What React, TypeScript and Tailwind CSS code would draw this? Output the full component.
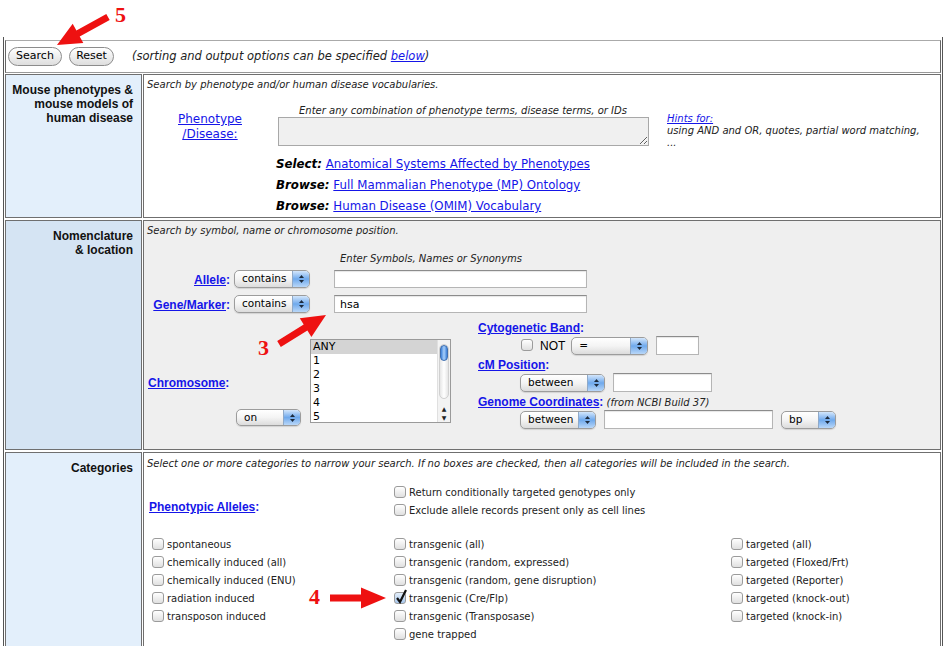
import React from 'react';

const verdana = "font-['DejaVu_Sans',Verdana,sans-serif]";
const arial = "font-['Liberation_Sans',Arial,sans-serif]";

const arrowPoints = (x1: number, y1: number, x2: number, y2: number, sw = 3.5, hl = 24, hw = 11) => {
  const len = Math.hypot(x2 - x1, y2 - y1);
  const dx = (x2 - x1) / len;
  const dy = (y2 - y1) / len;
  const nx = -dy;
  const ny = dx;
  const bx = x2 - dx * hl;
  const by = y2 - dy * hl;
  const pts = [
    [x1 + nx * sw, y1 + ny * sw],
    [bx + nx * sw, by + ny * sw],
    [bx + nx * hw, by + ny * hw],
    [x2, y2],
    [bx - nx * hw, by - ny * hw],
    [bx - nx * sw, by - ny * sw],
    [x1 - nx * sw, y1 - ny * sw],
  ];
  return pts.map(p => `${p[0].toFixed(1)},${p[1].toFixed(1)}`).join(' ');
};

const Arrows = () => (
  <svg className="absolute left-0 top-0 pointer-events-none" width="946" height="646">
    <polygon points={arrowPoints(108, 17, 57, 45)} fill="#ee1111" />
    <polygon points={arrowPoints(279, 344, 326, 315)} fill="#ee1111" />
    <polygon points={arrowPoints(330, 598, 386, 598, 3.5, 25, 10.5)} fill="#ee1111" />
    <text x="115" y="22" fill="#ee1111" fontSize="22" fontWeight="bold" fontFamily="Liberation Serif, serif">5</text>
    <text x="258" y="355" fill="#ee1111" fontSize="22" fontWeight="bold" fontFamily="Liberation Serif, serif">3</text>
    <text x="309" y="604" fill="#ee1111" fontSize="22" fontWeight="bold" fontFamily="Liberation Serif, serif">4</text>
  </svg>
);

const AquaSelect = ({ label, className }: { label: string; className: string }) => (
  <div className={`flex items-stretch rounded-[5px] border border-[#9c9c9c] bg-gradient-to-b from-white via-[#f4f4f4] to-[#dcdcdc] shadow-[0_1px_1px_rgba(0,0,0,0.12)] overflow-hidden ${className}`}>
    <span className={`flex-1 flex items-center pl-[7px] text-[10.5px] text-black ${verdana}`}>{label}</span>
    <span className="w-[17px] flex flex-col items-center justify-center gap-[2px] border-l border-[#8fa9c8] bg-gradient-to-b from-[#d3e6fb] via-[#6fa9ec] to-[#b9d7f8]">
      <svg width="5" height="3" viewBox="0 0 5 3"><path d="M2.5 0 L5 3 L0 3 Z" fill="#1c2a3c" /></svg>
      <svg width="5" height="3" viewBox="0 0 5 3"><path d="M0 0 L5 0 L2.5 3 Z" fill="#1c2a3c" /></svg>
    </span>
  </div>
);

const Box = ({ checked = false }: { checked?: boolean }) => (
  <span className={`relative inline-block shrink-0 w-[12px] h-[12px] rounded-[3px] border border-[#9b9b9b] bg-gradient-to-b ${checked ? 'from-[#e4effb] to-[#a9c9ee]' : 'from-white to-[#e0e0e0]'}`}>
    {checked && (
      <svg className="absolute left-[0px] top-[-4px]" width="13" height="15" viewBox="0 0 13 15">
        <path d="M2 9 L5 13 L11 1" stroke="#111" strokeWidth="2.2" fill="none" />
      </svg>
    )}
  </span>
);

const Check = ({ label, checked = false }: { label: string; checked?: boolean }) => (
  <div className="h-[18px] flex items-center">
    <Box checked={checked} />
    <span className="ml-[3px] text-[10px] text-[#222]">{label}</span>
  </div>
);

const TextBox = ({ className, value = '' }: { className: string; value?: string }) => (
  <input
    readOnly
    value={value}
    className={`border border-[#b5b5b5] border-t-[#8c8c8c] bg-white px-[5px] text-[11px] text-black shadow-[inset_0_1px_1px_rgba(0,0,0,0.1)] outline-none ${verdana} ${className}`}
  />
);

const FieldLink = ({ text }: { text: string }) => (
  <span className={`${arial} font-bold text-[12px] text-[#1515e8]`}>
    <a className="underline">{text}</a>:
  </span>
);

const leftHead = `w-[137px] shrink-0 border border-[#6f6f6f] pr-[8px] pt-[8px] text-right font-bold text-[12px] leading-[14px] text-[#111] ${arial}`;

const App = () => {
  return (
    <div className={`relative w-[946px] h-[646px] overflow-hidden bg-white ${verdana}`}>
      <div className="ml-[3px] mt-[37px] w-[940px] border-l border-r border-[#555] pt-[3px] px-[1px]">
        {/* search buttons */}
        <div className="h-[33px] flex items-center border border-[#aaa] border-b-[#999] border-l-[#666] border-r-[#666]">
          <button className="ml-[2px] w-[54px] h-[19px] rounded-full border border-[#8c8c8c] bg-gradient-to-b from-white to-[#dedede] text-[11px] text-black">Search</button>
          <button className="ml-[7px] w-[45px] h-[19px] rounded-full border border-[#8c8c8c] bg-gradient-to-b from-white to-[#dedede] text-[11px] text-black">Reset</button>
          <span className="ml-[18px] italic text-[11.5px] text-[#222]">
            (sorting and output options can be specified <a className="underline text-[#1515e8]">below</a>)
          </span>
        </div>

        {/* phenotypes */}
        <div className="mt-[1px] h-[144px] flex gap-[1px]">
          <div className={`${leftHead} bg-[#e3effb]`}>
            Mouse phenotypes &amp;<br />mouse models of<br />human disease
          </div>
          <div className="flex-1 border border-[#6f6f6f] bg-white">
            <div className="pl-[3px] pt-[3px] leading-[13px] italic text-[10px] text-[#222]">
              Search by phenotype and/or human disease vocabularies.
            </div>
            <div className="mt-[13px] flex">
              <div className="w-[132px] mt-[8px] text-center text-[12px] leading-[15px] text-[#1515e8] underline">
                Phenotype<br />/Disease:
              </div>
              <div className="w-[380px]">
                <div className="ml-[2px] w-[370px] text-center italic text-[10px] leading-[13px] text-[#222]">
                  Enter any combination of phenotype terms, disease terms, or IDs
                </div>
                <textarea readOnly className="block ml-[2px] w-[371px] h-[29px] border border-[#a8a8a8] bg-[#f0f0f0] outline-none resize" />
                <div className="mt-[8px] text-[11.8px] leading-[21px]">
                  <div><b className="italic text-black">Select:</b> <a className="underline text-[#1515e8]">Anatomical Systems Affected by Phenotypes</a></div>
                  <div><b className="italic text-black">Browse:</b> <a className="underline text-[#1515e8]">Full Mammalian Phenotype (MP) Ontology</a></div>
                  <div><b className="italic text-black">Browse:</b> <a className="underline text-[#1515e8]">Human Disease (OMIM) Vocabulary</a></div>
                </div>
              </div>
              <div className="ml-[11px] w-[265px] mt-[9px] italic text-[10px] leading-[12px] text-[#222]">
                <a className="underline text-[#1515e8]">Hints for:</a><br />
                using AND and OR, quotes, partial word matching, ...
              </div>
            </div>
          </div>
        </div>

        {/* nomenclature */}
        <div className="mt-[2px] h-[230px] flex gap-[1px]">
          <div className={`${leftHead} bg-[#d5e4f3]`}>
            Nomenclature<br />&amp; location
          </div>
          <div className="flex-1 border border-[#6f6f6f] bg-[#efefef]">
            <div className="pl-[3px] pt-[3px] leading-[13px] italic text-[10px] text-[#222]">
              Search by symbol, name or chromosome position.
            </div>
            <div className="mt-[15px] pl-[196px] italic text-[10px] leading-[13px] text-[#222]">
              Enter Symbols, Names or Synonyms
            </div>
            <div className="mt-[5px] h-[18px] flex items-center">
              <div className="w-[86px] text-right"><FieldLink text="Allele" /></div>
              <AquaSelect label="contains" className="ml-[4px] w-[76px] h-[18px]" />
              <TextBox className="ml-[24px] w-[253px] h-[18px]" />
            </div>
            <div className="mt-[7px] h-[18px] flex items-center">
              <div className="w-[86px] text-right"><FieldLink text="Gene/Marker" /></div>
              <AquaSelect label="contains" className="ml-[4px] w-[76px] h-[18px]" />
              <TextBox className="ml-[24px] w-[253px] h-[18px]" value="hsa" />
            </div>
            <div className="flex">
              <div className="w-[166px]">
                <div className="mt-[61px] pl-[4px] leading-[15px]"><FieldLink text="Chromosome" /></div>
                <AquaSelect label="on" className="mt-[18px] ml-[92px] w-[65px] h-[17px]" />
              </div>
              <div className="mt-[26px] w-[141px] h-[84px] flex border border-[#9a9a9a] bg-white">
                <div className="flex-1 text-[11px] leading-[14px] text-black">
                  <div className="pl-[2px] bg-[#d4d4d4]">ANY</div>
                  <div className="pl-[2px]">1</div>
                  <div className="pl-[2px]">2</div>
                  <div className="pl-[2px]">3</div>
                  <div className="pl-[2px]">4</div>
                  <div className="pl-[2px]">5</div>
                </div>
                <div className="w-[13px] flex flex-col items-center bg-[#f3f3f3] border-l border-[#e0e0e0]">
                  <div className="mt-[4px] w-[10px] h-[55px] rounded-full bg-gradient-to-r from-[#e6e6e6] via-white to-[#e6e6e6] border border-[#d0d0d0]">
                    <div className="w-[8px] h-[16px] rounded-full bg-gradient-to-r from-[#3a7fd8] via-[#a8d0fb] to-[#3a7fd8] border border-[#3f6fb0]" />
                  </div>
                  <div className="mt-[5px] text-[6px] leading-[9px] text-[#222]">▲</div>
                  <div className="text-[6px] leading-[9px] text-[#222]">▼</div>
                </div>
              </div>
              <div className="ml-[27px]">
                <div className="mt-[6px] h-[15px] leading-[15px]"><FieldLink text="Cytogenetic Band" /></div>
                <div className="mt-[2px] h-[19px] flex items-center">
                  <span className="ml-[43px]"><Box /></span>
                  <span className={`ml-[7px] text-[12px] text-black ${arial}`}>NOT</span>
                  <AquaSelect label="=" className="ml-[6px] w-[77px] h-[18px]" />
                  <TextBox className="ml-[8px] w-[43px] h-[19px]" />
                </div>
                <div className="mt-[1px] h-[15px] leading-[15px]"><FieldLink text="cM Position" /></div>
                <div className="mt-[2px] h-[19px] flex items-center">
                  <AquaSelect label="between" className="ml-[42px] w-[85px] h-[18px]" />
                  <TextBox className="ml-[8px] w-[99px] h-[19px]" />
                </div>
                <div className="mt-[1px] h-[15px] leading-[15px] whitespace-nowrap">
                  <FieldLink text="Genome Coordinates" />
                  <span className="italic text-[10px] text-[#222]"> (from NCBI Build 37)</span>
                </div>
                <div className="mt-[2px] h-[19px] flex items-center">
                  <AquaSelect label="between" className="ml-[42px] w-[76px] h-[18px]" />
                  <TextBox className="ml-[8px] w-[169px] h-[19px]" />
                  <AquaSelect label="bp" className="ml-[8px] w-[55px] h-[18px]" />
                </div>
              </div>
            </div>
          </div>
        </div>

        {/* categories */}
        <div className="mt-[2px] h-[200px] flex gap-[1px]">
          <div className={`${leftHead} bg-[#e3effb]`}>Categories</div>
          <div className="flex-1 border border-[#6f6f6f] bg-white">
            <div className="pl-[3px] pt-[4px] leading-[13px] italic text-[10px] text-[#222]">
              Select one or more categories to narrow your search. If no boxes are checked, then all categories will be included in the search.
            </div>
            <div className="mt-[13px] flex">
              <div className="w-[250px] pl-[5px] mt-[15px] leading-[15px]"><FieldLink text="Phenotypic Alleles" /></div>
              <div>
                <Check label="Return conditionally targeted genotypes only" />
                <Check label="Exclude allele records present only as cell lines" />
              </div>
            </div>
            <div className="mt-[16px] flex">
              <div className="w-[250px] pl-[8px]">
                <Check label="spontaneous" />
                <Check label="chemically induced (all)" />
                <Check label="chemically induced (ENU)" />
                <Check label="radiation induced" />
                <Check label="transposon induced" />
              </div>
              <div className="w-[337px]">
                <Check label="transgenic (all)" />
                <Check label="transgenic (random, expressed)" />
                <Check label="transgenic (random, gene disruption)" />
                <Check label="transgenic (Cre/Flp)" checked />
                <Check label="transgenic (Transposase)" />
                <Check label="gene trapped" />
              </div>
              <div>
                <Check label="targeted (all)" />
                <Check label="targeted (Floxed/Frt)" />
                <Check label="targeted (Reporter)" />
                <Check label="targeted (knock-out)" />
                <Check label="targeted (knock-in)" />
              </div>
            </div>
          </div>
        </div>
      </div>
      <Arrows />
    </div>
  );
};

export default App;
